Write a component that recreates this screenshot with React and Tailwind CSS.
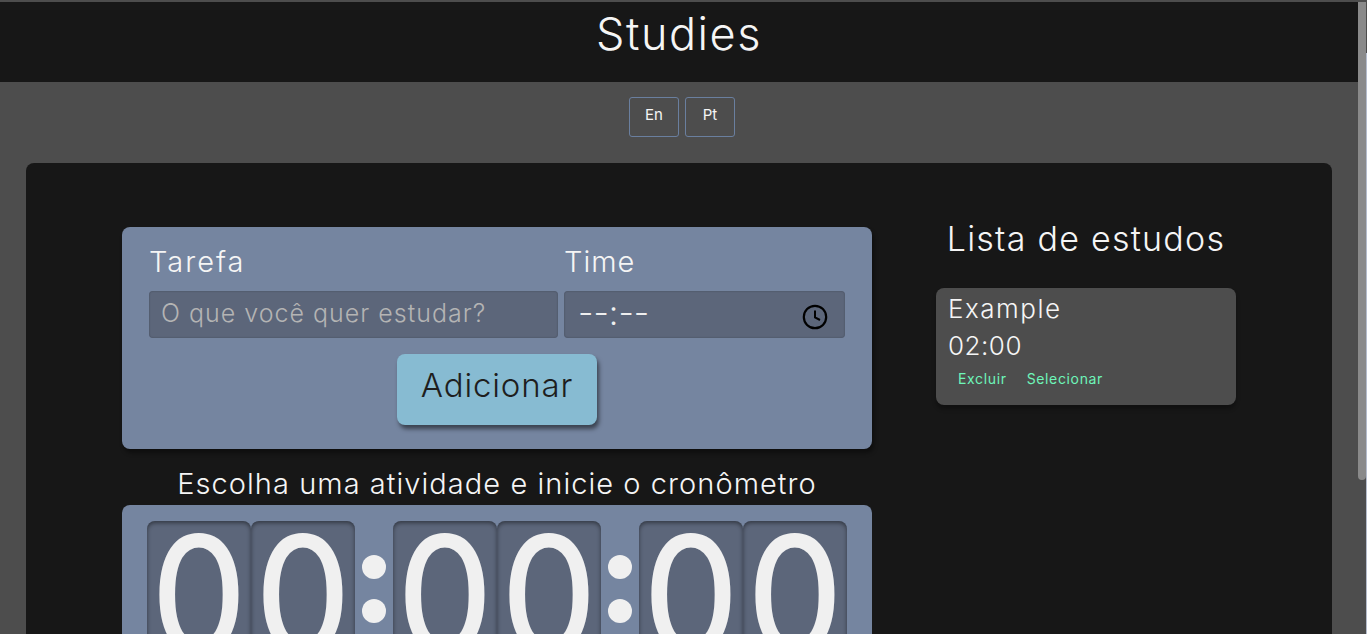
const Digit = () => (
  <div className="w-[104px] h-[200px] bg-[#5c667a] rounded-lg shadow-[inset_0_2px_4px_rgba(0,0,0,0.45)] flex justify-center overflow-hidden">
    <span className="font-['Lato',sans-serif] text-[#f0f0f0] [-webkit-text-stroke:2px_#f0f0f0] text-[148px] leading-[148px] h-[148px] origin-top scale-y-[1.12] mt-[-14px]">0</span>
  </div>
);

const Colon = () => (
  <div className="w-[38px] h-[200px] flex flex-col items-center gap-5 pt-[34px]">
    <div className="w-6 h-6 rounded-full bg-[#f0f0f0]" />
    <div className="w-6 h-6 rounded-full bg-[#f0f0f0]" />
  </div>
);

const App = () => {
  return (
    <div className="h-screen overflow-hidden flex bg-[#4d4d4d] font-['Inter',sans-serif]">
      <div className="w-[1358px] shrink-0 pt-0.5">
        {/* Top Bar */}
        <header className="h-20 bg-[#171717] flex justify-center">
          <h1 className="text-[#f5f5f5] text-[45px] leading-[64px] font-[350] tracking-[1.5px]">Studies</h1>
        </header>

        {/* Language */}
        <div className="flex justify-center gap-1.5 pt-[15px] pl-1.5">
          <button className="w-[50px] h-10 border border-[#6a7f9f] rounded-[3px] text-[#f5f5f5] text-[15px] pb-1">En</button>
          <button className="w-[50px] h-10 border border-[#6a7f9f] rounded-[3px] text-[#f5f5f5] text-[15px] pb-1">Pt</button>
        </div>

        {/* Content */}
        <main className="mx-[26px] mt-[26px] mb-[26px] bg-[#171717] rounded-lg px-24 pt-16 pb-10 flex gap-16">
          <div className="w-[750px] shrink-0">
            <form className="h-[222px] bg-[#7585a0] rounded-lg shadow-[2px_4px_4px_rgba(0,0,0,0.4)] px-[27px] pt-[15px]">
              <div className="flex gap-1.5">
                <div className="w-[409px]">
                  <label className="block text-[#f5f5f5] text-[29px] leading-[40px] font-[350] tracking-[2px]">Tarefa</label>
                  <input
                    placeholder="O que você quer estudar?"
                    className="mt-[9px] w-full h-[47px] bg-[#5c667a] rounded px-3 pb-1 text-[25px] font-[350] tracking-[1px] text-[#eee] placeholder:text-[#b4b4b4] shadow-[inset_0_0_2px_rgba(0,0,0,0.3)] outline-none"
                  />
                </div>
                <div className="w-[281px]">
                  <label className="block text-[#f5f5f5] text-[29px] leading-[40px] font-[350] tracking-[1px]">Time</label>
                  <div className="mt-[9px] h-[47px] bg-[#5c667a] rounded pl-3.5 pr-[17px] flex items-center justify-between shadow-[inset_0_0_2px_rgba(0,0,0,0.3)]">
                    <span className="text-[#eee] text-[34px] font-light leading-[34px] pb-1">--:--</span>
                    <svg width="26" height="26" viewBox="0 0 26 26" fill="none" stroke="#000" className="mt-[5px]">
                      <circle cx="13" cy="13" r="11.2" strokeWidth="2.2" />
                      <path d="M13 6.5v7l5 2.5" strokeWidth="2" />
                    </svg>
                  </div>
                </div>
              </div>
              <div className="flex justify-center mt-4">
                <button
                  type="button"
                  className="w-[200px] h-[71px] bg-[#87bbd2] rounded-lg text-[#1e1e1e] text-[33px] font-[350] tracking-[0.85px] shadow-[2px_4px_4px_rgba(0,0,0,0.5)] pb-2"
                >
                  Adicionar
                </button>
              </div>
            </form>

            {/* Timer */}
            <p className="text-center text-[#f5f5f5] text-[29px] leading-[40px] mt-[15px] font-[350] tracking-[1.05px]">
              Escolha uma atividade e inicie o cronômetro
            </p>
            <div className="mt-[1px] bg-[#7585a0] rounded-lg pt-4 pb-6 px-[25px] flex">
              <Digit />
              <Digit />
              <Colon />
              <Digit />
              <Digit />
              <Colon />
              <Digit />
              <Digit />
            </div>
          </div>

          {/* List */}
          <aside className="w-[300px] shrink-0">
            <h2 className="text-center text-[#f5f5f5] text-[34px] leading-[46px] font-[350] tracking-[1.25px] mt-[-11px]">Lista de estudos</h2>
            <div className="mt-[26px] h-[117px] bg-[#4d4d4d] rounded-lg shadow-[0_4px_4px_rgba(0,0,0,0.3)] px-3 pt-[5px]">
              <h3 className="text-[#f5f5f5] text-[26px] leading-[32px] font-[350] tracking-[1.5px]">Example</h3>
              <p className="text-[#f5f5f5] text-[26px] leading-[32px] mt-[5px] font-[350] tracking-[0.5px]">02:00</p>
              <div className="flex gap-5 pl-2.5 mt-[6px] text-[14px] tracking-[0.65px] text-[#6ef5b9]">
                <button>Excluir</button>
                <button>Selecionar</button>
              </div>
            </div>
          </aside>
        </main>
      </div>

      {/* Scrollbar */}
      <div className="w-[9px] shrink-0 flex">
        <div className="w-2 pt-0.5">
          <div className="h-[478px] bg-[#8a8a8a] rounded-b-md" />
        </div>
        <div className="w-px pt-[53px]">
          <div className="h-full bg-[#b4bccc]" />
        </div>
      </div>
    </div>
  );
};

export default App;
